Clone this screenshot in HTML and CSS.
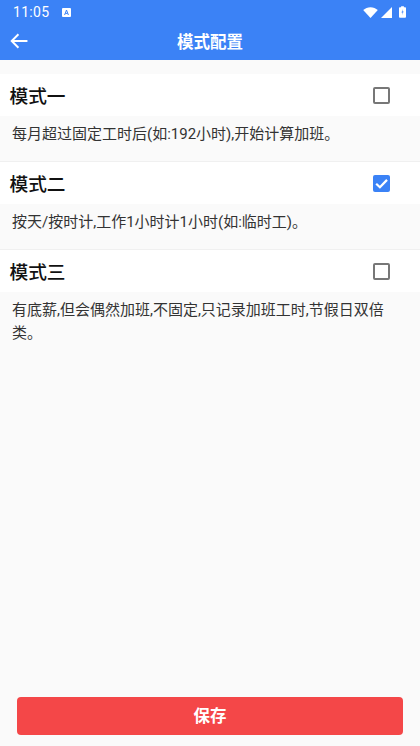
FILE: index.html
```html
<!DOCTYPE html>
<html lang="zh">
<head>
<meta charset="utf-8">
<title>模式配置</title>
<link rel="stylesheet" href="styles.css">
</head>
<body>
<div class="app">
  <div class="top">
    <div class="status">
      <span class="time">11:05</span>
      <svg class="note" viewBox="0 0 9 9"><rect width="9" height="9" rx="1" fill="#fff"/><path d="M2.6 7 4.5 2l1.9 5M3.4 5.4h2.2" fill="none" stroke="#3b82f6" stroke-width="1"/></svg>
      <span class="spacer"></span>
      <svg class="wifi" viewBox="0 0 16 12"><path d="M0 3.4C4.4-.9 11.6-.9 16 3.4L8 12z" fill="#fff"/></svg>
      <svg class="signal" viewBox="0 0 11 11"><path d="M11 0v11H0z" fill="#fff"/></svg>
      <svg class="battery" viewBox="0 0 8 13"><path d="M2.4 0h3.2v1H7a1 1 0 0 1 1 1v10a1 1 0 0 1-1 1H1a1 1 0 0 1-1-1V2a1 1 0 0 1 1-1h1.400z" fill="#fff"/><path d="M4.600 3 2.800 7h1.300l-.7 3 1.900-4H4z" fill="#3b82f6"/></svg>
    </div>
    <div class="bar">
      <svg class="back" viewBox="0 0 16 14"><path d="M15.500 7H1.500M7.500 1 1.500 7l6 6" fill="none" stroke="#fff" stroke-width="1.700"/></svg>
      <span class="bar-title">模式配置</span>
    </div>
  </div>
  <main class="list">
    <section class="mode">
      <div class="mode-head">
        <h2>模式一</h2>
        <span class="check"></span>
      </div>
      <p>每月超过固定工时后(如:192小时),开始计算加班。</p>
    </section>
    <section class="mode">
      <div class="mode-head">
        <h2>模式二</h2>
        <span class="check on"><svg viewBox="0 0 16 16"><path d="M3 8.200 6.500 11.500 13.200 4.600" fill="none" stroke="#fff" stroke-width="2.100"/></svg></span>
      </div>
      <p>按天/按时计,工作1小时计1小时(如:临时工)。</p>
    </section>
    <section class="mode">
      <div class="mode-head">
        <h2>模式三</h2>
        <span class="check"></span>
      </div>
      <p>有底薪,但会偶然加班,不固定,只记录加班工时,节假日双倍类。</p>
    </section>
  </main>
  <div class="foot"><button class="save">保存</button></div>
</div>
</body>
</html>
```
FILE: styles.css
```css
* { box-sizing: border-box; }
html, body { margin: 0; height: 100%; }
body { font-family: Roboto, "Noto Sans CJK SC", sans-serif; background: #fafafa; color: #333; }
.app { height: 746px; display: flex; flex-direction: column; overflow: hidden; }
.top { background: #3b82f6; color: #fff; height: 60px; flex: none; }
.status { height: 24px; display: flex; align-items: center; padding: 0 14px 0 13px; }
.time { font-size: 14px; letter-spacing: .3px; }
.note { width: 9px; height: 9px; margin-left: 13px; }
.spacer { flex: 1; }
.wifi { width: 15px; height: 11px; margin-right: 3px; }
.signal { width: 11px; height: 11px; margin-right: 7px; }
.battery { width: 7px; height: 12px; }
.bar { height: 36px; position: relative; display: flex; align-items: center; justify-content: center; }
.back { position: absolute; left: 10px; top: 9px; width: 18px; height: 16px; }
.bar-title { font-size: 16.500px; font-weight: 700; margin-top: -3px; }
.list { flex: 1; padding-top: 14px; }
.mode { border-bottom: 1px solid #f0f0f0; height: 88px; }
.mode:last-child { border-bottom: 0; height: auto; }
.mode-head { height: 42px; background: #fff; display: flex; align-items: center; justify-content: space-between; padding: 0 30px 0 9.500px; }
.mode-head h2 { margin: -2px 0 0; font-size: 18.700px; font-weight: 500; color: #111; }
.check { width: 17px; height: 17px; border: 2px solid #777; border-radius: 2px; background: #fff; display: block; }
.check.on { background: #3b82f6; border: 0; }
.check svg { display: block; width: 17px; height: 17px; }
.mode p { margin: 0; padding: 7px 12px 0; font-size: 15px; line-height: 23px; color: #333; }
.foot { flex: none; padding: 0 17px 11px; }
.save { display: block; width: 100%; height: 38px; padding: 0 0 2px; border: 0; border-radius: 4px; background: #f44748; color: #fff; font: 700 16.500px Roboto, "Noto Sans CJK SC", sans-serif; }
```
